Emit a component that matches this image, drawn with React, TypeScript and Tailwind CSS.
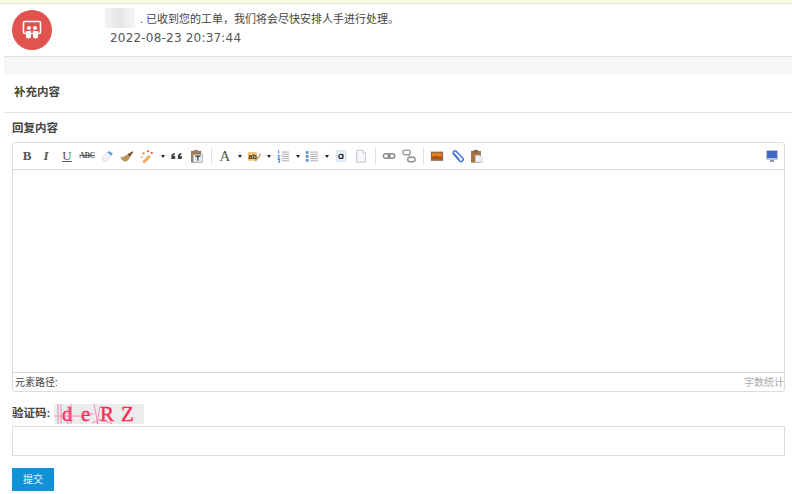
const font = '[font-family:"Liberation_Sans","Noto_Sans_CJK_SC",sans-serif]'

function Caret() {
	return (
		<span className="flex w-[9px] justify-center">
			<span className="h-0 w-0 border-x-[2.5px] border-t-[3px] border-x-transparent border-t-[#222]"></span>
		</span>
	)
}

function Sep() {
	return (
		<span className="flex w-[8px] justify-center">
			<span className="h-[17px] w-px bg-[#e0e0e0]"></span>
		</span>
	)
}

function Icon({ children }: { children: React.ReactNode }) {
	return (
		<span className="flex w-[20px] justify-center">
			<svg width="14" height="14" viewBox="0 0 16 16" className="shrink-0">
				{children}
			</svg>
		</span>
	)
}

function Letter({ children, className }: { children: string; className: string }) {
	return <span className={`flex h-4 w-[20px] items-center justify-center text-[#555] [font-family:"Liberation_Serif",serif] ${className}`}>{children}</span>
}

function Toolbar() {
	return (
		<div className="flex h-[27px] items-center border-b border-[#d9d9d9] pl-[4px] pr-[4px]">
			<Letter className="text-[13px] font-bold">B</Letter>
			<Letter className="-ml-[1px] mr-[1px] text-[13px] font-bold italic">I</Letter>
			<Letter className="text-[13px] underline">U</Letter>
			<span className="flex h-4 w-[20px] items-center justify-center text-[8px] font-bold tracking-[-0.5px] text-[#555] line-through [font-family:'Liberation_Serif',serif]">ABC</span>
			{/* eraser */}
			<Icon>
				<path d="M2 10 10 2.500l4.500 3L7 14H4.500z" fill="#f3f4f6" stroke="#c4c8ce" strokeWidth=".7" />
				<path d="M8.500 4 10.500 2.500l4 3-1.800 2z" fill="#5f9bdc" />
			</Icon>
			{/* brush */}
			<Icon>
				<path d="M1 9.500c3 .3 5-1 7-3l3 3c-1 2.500-3 4.500-5 4.500-2.500 0-4-2-5-4.500z" fill="#c79a5c" stroke="#8c6330" strokeWidth=".5" />
				<path d="M3.500 12l3-3M6 13l3-3" stroke="#8c6330" strokeWidth=".6" />
				<path d="M8.500 6l6-3.500.8 1L11 9.500z" fill="#7d5423" />
			</Icon>
			{/* wand */}
			<Icon>
				<path d="M3 14.500 10 7.500l2 1.500-7 7z" fill="#eeb45a" stroke="#d9822b" strokeWidth=".6" />
				<circle cx="4" cy="5" r="1.300" fill="#ef7d22" />
				<circle cx="9" cy="2.500" r="1.200" fill="#e6492d" />
				<circle cx="13.500" cy="4.500" r="1.200" fill="#e6492d" />
				<circle cx="2" cy="9.500" r="1" fill="#f0a030" />
			</Icon>
			<span className="w-[1px]"></span>
			<Caret />
			{/* quote */}
			<Icon>
				<path d="M1.500 9a4 4 0 0 1 4-4.500v2.200c-.9 0-1.300.5-1.300 1.300H6v3.500H1.500zM9 9a4 4 0 0 1 4-4.500v2.200c-.9 0-1.300.5-1.300 1.300h1.800v3.500H9z" fill="#444" />
			</Icon>
			{/* paste as text */}
			<Icon>
				<rect x="1.500" y="2.500" width="11" height="12.500" fill="#a87a4c" stroke="#7d5a36" strokeWidth=".6" />
				<rect x="4.500" y="1" width="5" height="3" fill="#8f8f8f" />
				<rect x="3.500" y="6" width="11" height="9" fill="#e6ebf1" stroke="#8d939b" strokeWidth=".6" />
				<path d="M6 8.200h6M9 8.200V13.500" stroke="#333" strokeWidth="1.300" fill="none" />
			</Icon>
			<Sep />
			<Letter className="text-[15px]">A</Letter>
			<Caret />
			{/* highlight */}
			<Icon>
				<rect x="1" y="3.500" width="10.500" height="10" rx="1.500" fill="#edc774" />
				<text x="1.800" y="11" fontSize="8" fontWeight="bold" fill="#333" fontFamily="Liberation Sans">ab</text>
				<path d="M9 13l5-6 1.200 1-5 6z" fill="#c98a3c" />
				<path d="M13.500 6l1.500-1 .8 1.500-1 1z" fill="#e0566a" />
			</Icon>
			<Caret />
			{/* ordered list */}
			<Icon>
				<path d="M3 1.500v4M2 7.500h2.500l-2.500 3h2.500M2 12h2.500l-1 1.500 1 1.500H2" stroke="#3f7fd8" strokeWidth="1.100" fill="none" />
				<path d="M6.500 3.500h8.500M6.500 6h8.500M6.500 8.500h8.500M6.500 11h8.500M6.500 13.500h8.500" stroke="#9a9a9a" strokeWidth=".9" />
			</Icon>
			<Caret />
			{/* unordered list */}
			<Icon>
				<rect x="1" y="2.500" width="3" height="3" fill="#4a8ae0" />
				<rect x="1" y="7" width="3" height="3" fill="#4a8ae0" />
				<rect x="1" y="11.500" width="3" height="3" fill="#4a8ae0" />
				<path d="M6 3.500h9M6 6h9M6 8.500h9M6 11h9M6 13.500h9" stroke="#9a9a9a" strokeWidth=".9" />
			</Icon>
			<Caret />
			{/* anchor text */}
			<Icon>
				<rect x="2.500" y="2" width="11" height="12" fill="#eef4fc" stroke="#a8c8f0" strokeDasharray="1.500 1" />
				<circle cx="7.800" cy="8.500" r="2.300" fill="none" stroke="#333" strokeWidth="1.400" />
				<path d="M10 5.500v5.500" stroke="#333" strokeWidth="1.400" />
			</Icon>
			{/* new page */}
			<Icon>
				<path d="M3 1.500h7l3 3v10.500H3z" fill="#f5f7fa" stroke="#b9c0c9" />
				<path d="M10 1.500v3h3" fill="#e4e8ee" stroke="#b9c0c9" strokeWidth=".7" />
			</Icon>
			<Sep />
			{/* link */}
			<Icon>
				<rect x="1.500" y="5.500" width="7.500" height="5" rx="2.500" fill="none" stroke="#8a8a8a" strokeWidth="1.700" />
				<rect x="7" y="5.500" width="7.500" height="5" rx="2.500" fill="none" stroke="#8a8a8a" strokeWidth="1.700" />
			</Icon>
			{/* unlink */}
			<Icon>
				<rect x="1" y="1.500" width="8.500" height="5" rx="2.500" fill="none" stroke="#a2a2a2" strokeWidth="1.600" />
				<rect x="6.500" y="9.500" width="8.500" height="5" rx="2.500" fill="none" stroke="#8f8f8f" strokeWidth="1.600" />
				<path d="M8 6.500 9 9.500" stroke="#a2a2a2" strokeWidth="1.400" />
			</Icon>
			<Sep />
			{/* image */}
			<Icon>
				<rect x="1" y="3" width="14" height="10.500" fill="#8a6a4a" />
				<rect x="2.500" y="4.500" width="11" height="7.500" fill="#e67d1f" />
				<path d="M2.500 9c3-1.500 6-1 11 0v3h-11z" fill="#a8541c" />
			</Icon>
			{/* attachment */}
			<Icon>
				<path d="M3 4.500l7.800 9a2.400 2.400 0 0 0 3.600-3.200L7 2.500a2 2 0 0 0-3 2.500l6.500 7" fill="none" stroke="#3f74cf" strokeWidth="1.700" />
			</Icon>
			{/* paste */}
			<Icon>
				<rect x="1.500" y="2.500" width="10.500" height="12.500" fill="#a5713e" stroke="#7d5228" strokeWidth=".6" />
				<rect x="4" y="1" width="5" height="3" fill="#7a6a5a" />
				<path d="M6 7h5l3 3v5H6z" fill="#eef0f4" stroke="#a8adb5" strokeWidth=".6" />
			</Icon>
			<div className="grow"></div>
			{/* fullscreen */}
			<svg width="14" height="14" viewBox="0 0 14 14" className="mr-[1px] shrink-0">
				<rect x="1" y="1" width="12" height="10" rx="1" fill="#b9c4d4" />
				<rect x="2" y="2" width="10" height="7" fill="#3f68c4" />
				<rect x="5" y="11" width="4" height="2" fill="#8b97aa" />
			</svg>
		</div>
	)
}

function Captcha() {
	return (
		<div className="relative flex h-5 w-[90px] items-center bg-[#ececec] pl-[8px] text-[21px] font-normal leading-5 text-[#fb2a55] [-webkit-text-stroke:0.4px_#fb2a55] [font-family:'Liberation_Serif',serif]">
			<span className="w-[19px]">d</span>
			<span className="w-[19px]">e</span>
			<span className="w-[21px]">R</span>
			<span>Z</span>
			<svg width="90" height="20" viewBox="0 0 90 20" className="absolute left-0 top-0">
				<path d="M4 0v20M7 0v20M14 2v18M17 0v20M0 12h28M28 10h12M40 0l4 20M46 2l-3 18M38 19l10-4 10 5" stroke="#fb6fb0" strokeWidth=".8" fill="none" />
			</svg>
		</div>
	)
}

export default function App() {
	return (
		<div className={`h-[494px] w-[792px] overflow-hidden bg-white ${font}`}>
			<div className="h-[4px] border-b border-[#e6e6d8] bg-[#fbfbe6]"></div>
			<div className="ml-[4px] flex h-[53px] border-b border-[#e2e2e2] pl-[8px]">
				<div className="mt-[6px] flex h-[40px] w-[40px] items-center justify-center rounded-full bg-[#e0534f]">
					<svg width="20" height="20" viewBox="0 0 20 20">
						<rect x="1.500" y="1.500" width="17" height="12" rx="1.500" fill="none" stroke="#fff" strokeWidth="1.600" />
						<circle cx="7" cy="8" r="2" fill="#fff" />
						<circle cx="13" cy="8" r="2" fill="#fff" />
						<path d="M4 11h5v5a2.500 2.500 0 0 1-5 0zM11 11h5v5a2.500 2.500 0 0 1-5 0z" fill="#fff" />
					</svg>
				</div>
				<div className="ml-[53px] pt-[4px]">
					<div className="flex h-[20px] items-center text-[11px] text-[#444]">
						<span className="mr-[5px] h-[20px] w-[30px] bg-gradient-to-r from-[#f2f2f2] via-[#e6e6e6] to-[#f6f6f6]"></span>
						<span className="relative top-[1px] whitespace-nowrap">. 已收到您的工单，我们将会尽快安排人手进行处理。</span>
					</div>
					<div className="ml-[5px] mt-[1px] text-[12px] leading-[18px] tracking-[0.2px] text-[#555] [font-family:'DejaVu_Sans',sans-serif]">2022-08-23 20:37:44</div>
				</div>
			</div>
			<div className="ml-[4px] h-[17px] bg-[#f6f6f6]"></div>
			<div className="ml-[4px] flex h-[39px] items-center border-b border-[#e2e2e2] pl-[10px] text-[11.5px] font-bold text-[#444]">补充内容</div>
			<div className="px-[12px]">
				<div className="flex h-[29px] items-center pt-[2px] text-[11.5px] font-bold text-[#444]">回复内容</div>
				<div className="flex h-[250px] w-[773px] flex-col rounded-[3px] border border-[#dcdcdc]">
					<Toolbar />
					<div className="grow"></div>
					<div className="flex h-[19px] items-center justify-between border-t border-[#d9d9d9] pl-[2px] text-[10px]">
						<span className="text-[#444]">元素路径:</span>
						<span className="text-[#aaa]">字数统计</span>
					</div>
				</div>
				<div className="mt-[12px] flex h-[20px] items-center text-[11.5px] font-bold text-[#444]">
					<span className="mr-[3px] w-[39px] whitespace-nowrap">验证码:</span>
					<Captcha />
				</div>
				<div className="mt-[2px] h-[30px] w-[773px] border border-[#dcdcdc] bg-white"></div>
				<button className="mt-[12px] flex h-[23px] w-[42px] items-center justify-center bg-[#1192d6] text-[10px] text-[#e6f4fb]">提交</button>
			</div>
		</div>
	)
}
